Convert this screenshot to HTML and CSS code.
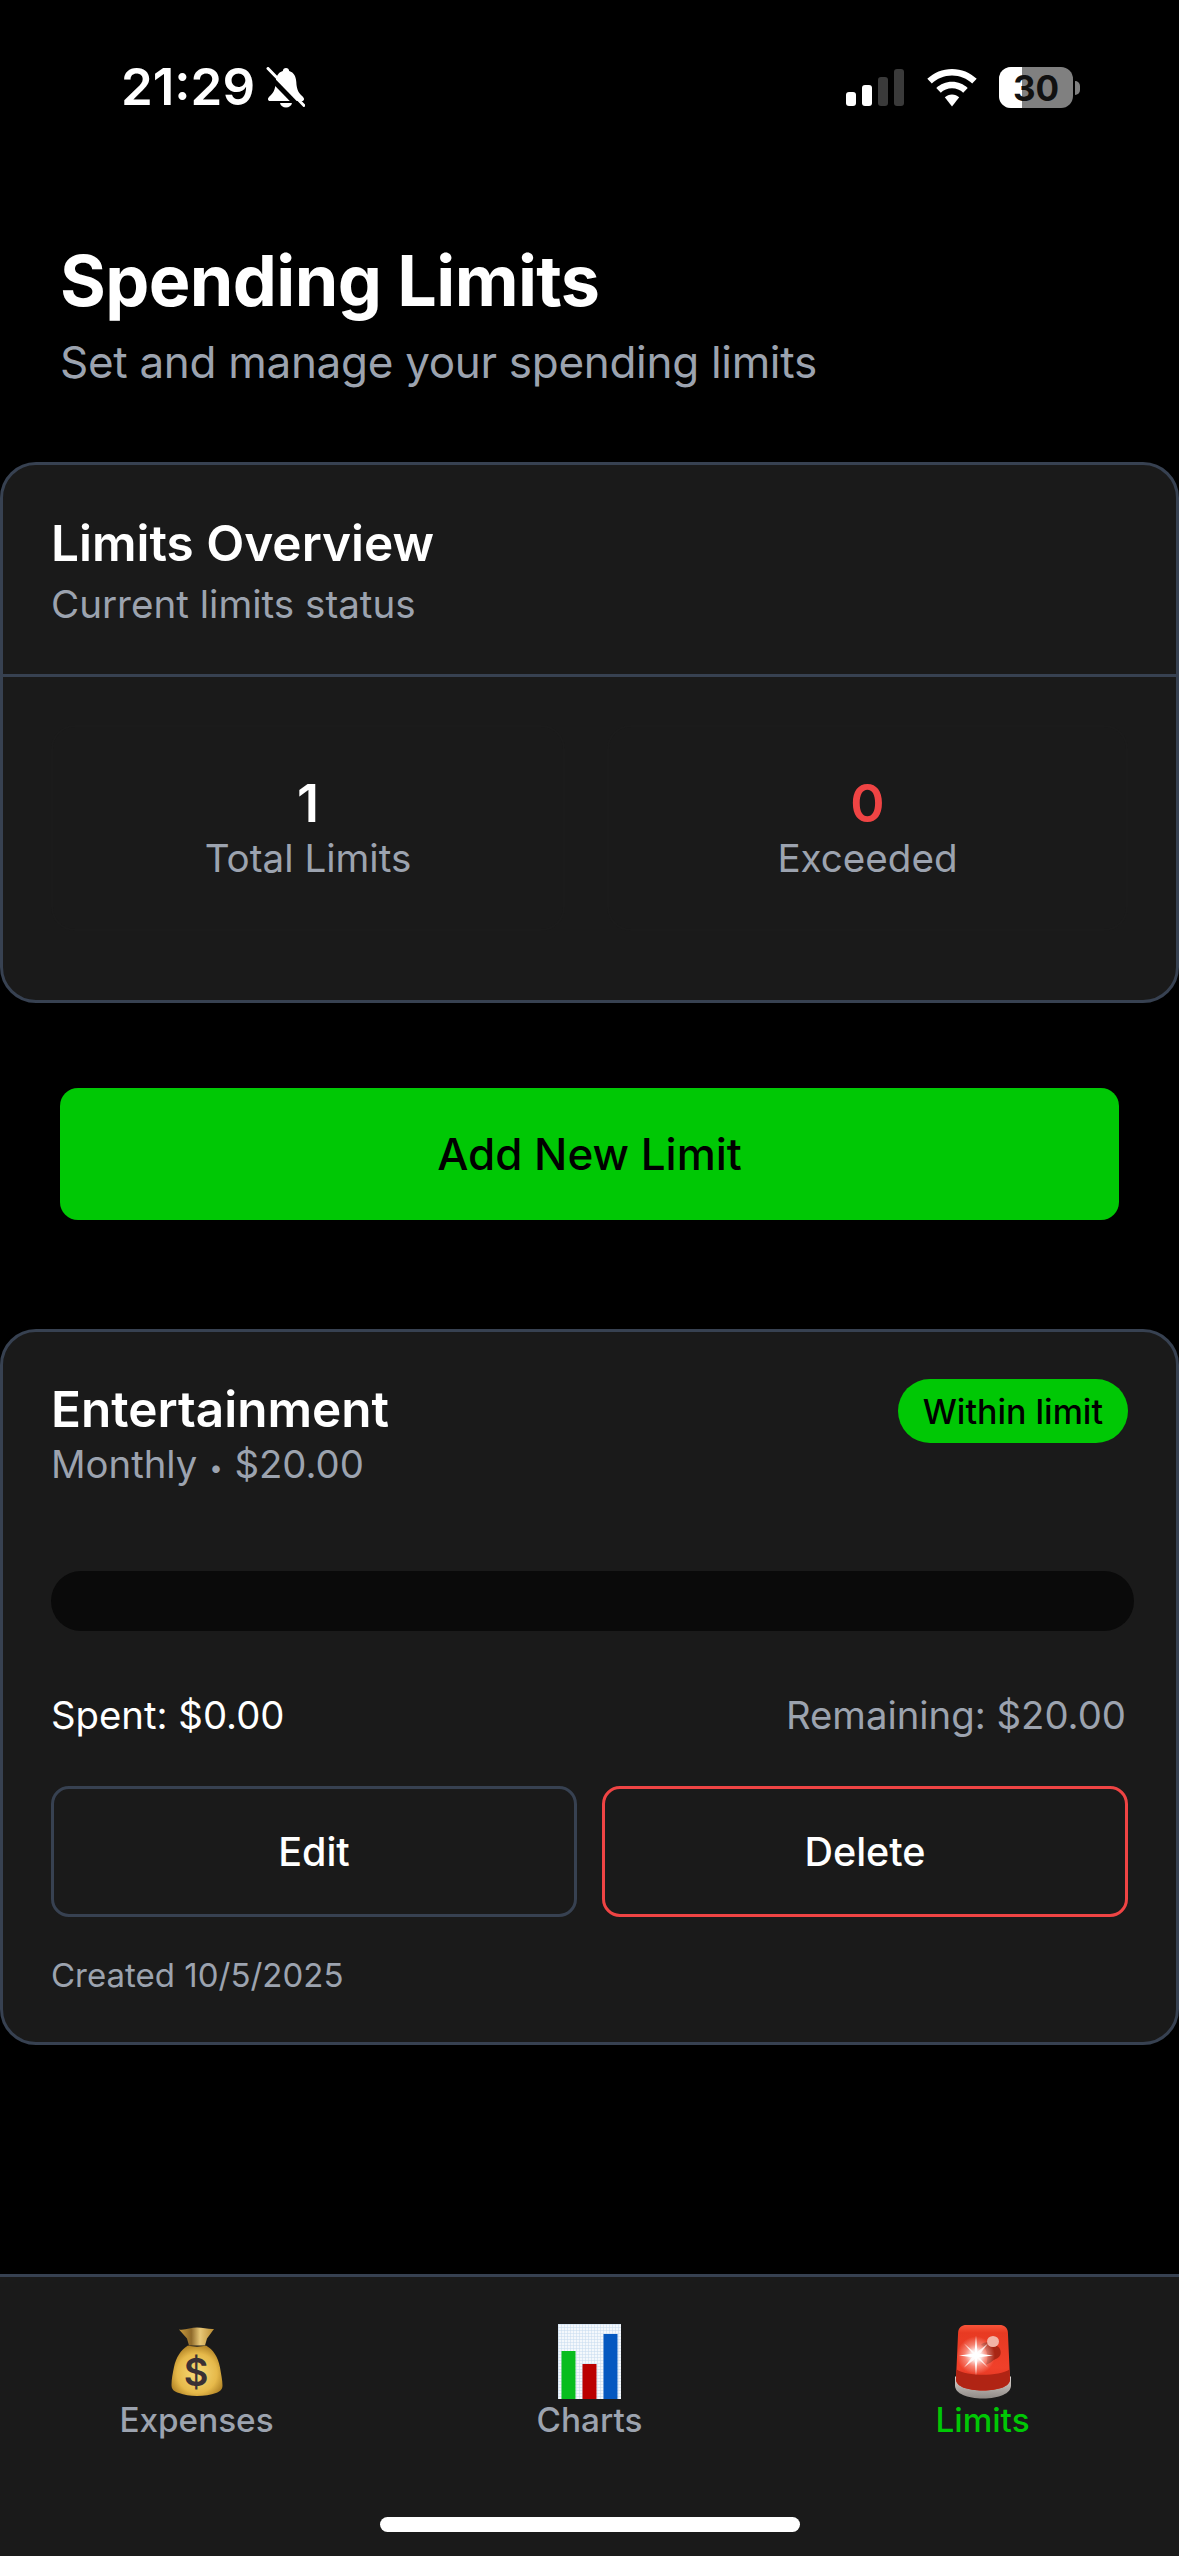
FILE: index.html
```html
<!DOCTYPE html>
<html lang="en">
<head>
    <meta charset="UTF-8">
    <meta name="viewport" content="width=device-width, initial-scale=1.0">
    <title>Spending Limits</title>
    <link rel="stylesheet" href="styles.css">
</head>

<body>
    <div class="app">
        <div class="statusBar">
            <div class="statusLeft">
                <span class="clock">21:29</span>
                <svg class="bell" width="39" height="41" viewBox="0 0 39 41">
                    <path fill="#fff" d="M20 1c-1.800 0-3 1.200-3.200 2.900C12 5.300 10 9.500 9.700 15c-.3 6-1.200 9.500-5.500 13.800C2.500 30.500 2 31 2 32.200c0 1 .8 1.800 2.200 1.800h31.600c1.400 0 2.200-.8 2.200-1.800 0-1.200-.5-1.700-2.200-3.400-4.300-4.300-5.200-7.800-5.500-13.800-.3-5.500-2.300-9.700-7.100-11.100C23 2.200 21.800 1 20 1z"/>
                    <path fill="#fff" d="M14 36h12c-.6 2.800-3 4.500-6 4.500s-5.400-1.700-6-4.500z"/>
                    <path stroke="#000" stroke-width="5" d="M-1 5L34 41"/>
                    <path stroke="#fff" stroke-width="3" stroke-linecap="round" d="M2 1.500L38 38.500"/>
                </svg>
            </div>
            <div class="statusRight">
                <div class="signal">
                    <span class="bar bar1"></span>
                    <span class="bar bar2"></span>
                    <span class="bar bar3 off"></span>
                    <span class="bar bar4 off"></span>
                </div>
                <svg class="wifi" width="50" height="38" viewBox="0 0 50 38">
                    <path fill="#fff" d="M25 0c9.500 0 18.200 3.700 24.700 9.800l-4.500 4.700C40 9.500 32.900 6.500 25 6.500S10 9.500 4.800 14.500L.3 9.800C6.800 3.700 15.500 0 25 0z"/>
                    <path fill="#fff" d="M25 12.800c6.100 0 11.600 2.400 15.700 6.200l-4.500 4.700c-2.900-2.700-6.900-4.400-11.200-4.400s-8.300 1.700-11.200 4.400L9.300 19c4.100-3.800 9.600-6.200 15.700-6.200z"/>
                    <path fill="#fff" d="M25 25.500c2.800 0 5.300 1.100 7.200 2.800L25 37.500l-7.200-9.200c1.900-1.700 4.400-2.800 7.200-2.800z"/>
                </svg>
                <div class="battery">
                    <div class="batteryBody">
                        <div class="batteryFill"></div>
                        <span class="batteryText">30</span>
                    </div>
                    <div class="batteryNub"></div>
                </div>
            </div>
        </div>

        <div class="pageHead">
            <h1>Spending Limits</h1>
            <p>Set and manage your spending limits</p>
        </div>

        <div class="card overview">
            <div class="overviewHead">
                <h2>Limits Overview</h2>
                <p>Current limits status</p>
            </div>
            <div class="stats">
                <div class="stat">
                    <div class="statNum">1</div>
                    <div class="statLabel">Total Limits</div>
                </div>
                <div class="stat">
                    <div class="statNum red">0</div>
                    <div class="statLabel">Exceeded</div>
                </div>
            </div>
        </div>

        <div class="addWrap">
            <button class="addBtn">Add New Limit</button>
        </div>

        <div class="card limit">
            <div class="limitTop">
                <div>
                    <h2>Entertainment</h2>
                    <p>Monthly <span class="dot">•</span> $20.00</p>
                </div>
                <span class="pill">Within limit</span>
            </div>
            <div class="track"></div>
            <div class="amounts">
                <span class="spent">Spent: $0.00</span>
                <span class="remaining">Remaining: $20.00</span>
            </div>
            <div class="actions">
                <button class="actionBtn">Edit</button>
                <button class="actionBtn danger">Delete</button>
            </div>
            <div class="created">Created 10/5/2025</div>
        </div>

        <div class="tabBar">
            <div class="tab">
                <svg class="tabIcon" width="52" height="70" viewBox="0 0 52 70">
                    <defs>
                        <radialGradient id="bagFill" cx="50%" cy="55%" r="60%">
                            <stop offset="0" stop-color="#f7dc7a"/>
                            <stop offset="0.65" stop-color="#e6b94a"/>
                            <stop offset="1" stop-color="#a87a20"/>
                        </radialGradient>
                        <linearGradient id="neckFill" x1="0" x2="1" y1="0" y2="0">
                            <stop offset="0" stop-color="#c99a3c"/>
                            <stop offset="0.35" stop-color="#8f6a2a"/>
                            <stop offset="0.6" stop-color="#e8c878"/>
                            <stop offset="1" stop-color="#b98a30"/>
                        </linearGradient>
                    </defs>
                    <path fill="url(#neckFill)" d="M8 3c6 1 12-2 18-2s12 2 17 1.500L36 12l-2 7H18l-2-7z"/>
                    <path fill="url(#bagFill)" d="M17 19c5 1.500 13 1.500 18 0 7 4 12 11 14 22 1 6 2.500 13 2.500 18 0 4-2.500 6-6.500 7.500-5 2-12 3-19 3s-13-1-18-3c-5-1.500-7.500-3.500-7.500-8 0-6 1.300-12 2.500-18C5 31 10 23 17 19z"/>
                    <text class="bagSign" x="25" y="59" text-anchor="middle">$</text>
                </svg>
                <span class="tabLabel">Expenses</span>
            </div>
            <div class="tab">
                <svg class="tabIcon" width="63" height="75" viewBox="0 0 63 75">
                    <defs>
                        <pattern id="chartGrid" width="3" height="3" patternUnits="userSpaceOnUse">
                            <rect width="3" height="3" fill="#f4f8fc"/>
                            <path d="M0 0H3M0 0V3" stroke="#c6dbef" stroke-width="1"/>
                        </pattern>
                    </defs>
                    <rect width="63" height="75" fill="url(#chartGrid)"/>
                    <rect x="3.500" y="27" width="14" height="48" fill="#08bd1e"/>
                    <rect x="24.500" y="40" width="14" height="35" fill="#bb0000"/>
                    <rect x="45.500" y="10" width="14" height="65" fill="#0458c0"/>
                </svg>
                <span class="tabLabel">Charts</span>
            </div>
            <div class="tab active">
                <svg class="tabIcon" width="56" height="74" viewBox="0 0 56 74">
                    <defs>
                        <linearGradient id="sirenFill" x1="0" x2="0" y1="0" y2="1">
                            <stop offset="0" stop-color="#f8553a"/>
                            <stop offset="0.12" stop-color="#e83a22"/>
                            <stop offset="0.65" stop-color="#f0402a"/>
                            <stop offset="1" stop-color="#d6301c"/>
                        </linearGradient>
                        <linearGradient id="sirenBase" x1="0" x2="0" y1="0" y2="1">
                            <stop offset="0" stop-color="#d8d2ce"/>
                            <stop offset="1" stop-color="#8f8a86"/>
                        </linearGradient>
                        <radialGradient id="sirenFlash">
                            <stop offset="0" stop-color="#fff"/>
                            <stop offset="0.3" stop-color="#fff" stop-opacity="0.85"/>
                            <stop offset="0.6" stop-color="#ffc4b8" stop-opacity="0.5"/>
                            <stop offset="1" stop-color="#ffc4b8" stop-opacity="0"/>
                        </radialGradient>
                    </defs>
                    <path fill="url(#sirenBase)" d="M0 52h56v9c0 8-12 13-28 13S0 69 0 61z"/>
                    <path fill="url(#sirenFill)" d="M3 10C3 3 6 .5 12 .5h32C50 .5 53 3 53 10l2 45c0 7-12 11-27 11S1 62 1 55z"/>
                    <path fill="#b02414" d="M1.500 45C12 52 44 52 54.500 45l.5 10c0 7-12 11-27 11S1 62 1 55z"/>
                    <path fill="#a82614" d="M26 20c6-4 12-2 18 3 3 4 2 9-2 11-4 1-6 5-11 6 2-6 3-14-5-20z"/>
                    <ellipse cx="38" cy="17" rx="6" ry="5.500" fill="#f2b3a6"/>
                    <circle cx="21" cy="31" r="19" fill="url(#sirenFlash)"/>
                    <path fill="#fff" d="M21 11L22.500 29L38 31L22.500 33L21 51L19.500 33L4 31L19.500 29z"/>
                    <path fill="#fff" opacity="0.8" d="M9 19L21.500 29.500L33 43L20.500 32.500zM33 19L22.500 32.500L9 43L19.500 29.500z"/>
                </svg>
                <span class="tabLabel">Limits</span>
            </div>
            <div class="homeBar"></div>
        </div>
    </div>
</body>
</html>
```

FILE: styles.css
```css
* {
    box-sizing: border-box;
}

html, body {
    margin: 0;
    padding: 0;
    background: #000;
}

h1, h2, p {
    margin: 0;
}

button {
    font-family: inherit;
    cursor: pointer;
}

.app {
    width: 1179px;
    height: 2556px;
    display: flex;
    flex-direction: column;
    overflow: hidden;
    font-family: Inter, "Liberation Sans", sans-serif;
    color: #fff;
    background: #000;
}

/* status bar */
.statusBar {
    height: 174px;
    flex-shrink: 0;
    display: flex;
    justify-content: space-between;
    align-items: flex-start;
    padding: 62px 99px 0 121px;
}

.statusLeft {
    display: flex;
    align-items: center;
    gap: 11px;
    height: 50px;
}

.clock {
    font-size: 51px;
    font-weight: 600;
    line-height: 50px;
}

.statusRight {
    display: flex;
    align-items: flex-start;
    margin-top: 5px;
}

.signal {
    display: flex;
    align-items: flex-end;
    gap: 6px;
    height: 37px;
    margin-top: 2px;
}

.bar {
    width: 10px;
    border-radius: 3px;
    background: #fff;
}

.bar.off {
    background: #3a3a3a;
}

.bar1 { height: 14px; }
.bar2 { height: 21px; }
.bar3 { height: 29px; }
.bar4 { height: 37px; }

.wifi {
    margin: 2px 22px 0 23px;
}

.battery {
    display: flex;
    align-items: center;
    height: 41px;
}

.batteryBody {
    position: relative;
    width: 74px;
    height: 41px;
    border-radius: 12px;
    background: #808080;
    overflow: hidden;
    display: flex;
    align-items: center;
    justify-content: center;
}

.batteryFill {
    position: absolute;
    left: 0;
    top: 0;
    bottom: 0;
    width: 23px;
    background: #fff;
}

.batteryText {
    position: relative;
    font-size: 35px;
    font-weight: 700;
    color: #111;
}

.batteryNub {
    width: 5px;
    height: 14px;
    margin-left: 2px;
    border-radius: 0 7px 7px 0;
    background: #808080;
}

/* heading */
.pageHead {
    height: 288px;
    padding: 70px 60px 0;
}

.pageHead h1 {
    font-size: 70px;
    line-height: 74px;
    font-weight: 700;
    letter-spacing: -0.6px;
}

.pageHead p {
    margin-top: 18px;
    font-size: 44px;
    line-height: 52px;
    letter-spacing: -0.3px;
    color: #9ca3af;
}

/* cards */
.card {
    width: 1179px;
    flex-shrink: 0;
    border: 3px solid #374151;
    border-radius: 36px;
    background: #1a1a1a;
}

.card h2 {
    font-size: 49.5px;
    line-height: 58px;
    font-weight: 600;
}

.overview {
    height: 541px;
}

.overviewHead {
    height: 212px;
    padding: 49px 48px 0;
    border-bottom: 3px solid #374151;
}

.overviewHead p, .limitTop p {
    font-size: 38.6px;
    line-height: 46px;
    color: #9ca3af;
}

.overviewHead p {
    margin-top: 9px;
}

.limitTop p {
    margin-top: 3px;
    font-size: 38.3px;
}

.dot {
    font-size: 24px;
    margin: 0 1px;
    vertical-align: 2px;
}

.stats {
    display: grid;
    grid-template-columns: 514px 521px;
    gap: 42px;
    padding: 48px 48px;
}

.stat {
    height: 206px;
    display: flex;
    flex-direction: column;
    align-items: center;
    justify-content: center;
    border: 2px solid #1b1b1b;
    border-radius: 24px;
    background: #1a1a1a;
}

.statNum {
    font-size: 52px;
    line-height: 60px;
    font-weight: 600;
}

.statNum.red {
    color: #ef4444;
}

.statLabel {
    font-size: 38.6px;
    line-height: 48px;
    color: #9ca3af;
}

.addWrap {
    padding: 85px 60px 109px;
}

.addBtn {
    display: block;
    width: 100%;
    height: 132px;
    border: 0;
    border-radius: 18px;
    background: #00c805;
    color: #000;
    font-size: 44px;
    font-weight: 500;
}

.limit {
    height: 716px;
    padding: 47px 48px 0;
}

.limitTop {
    display: flex;
    justify-content: space-between;
    align-items: flex-start;
    height: 192px;
}

.limitTop h2 {
    margin-top: 1px;
}

.pill {
    height: 64px;
    padding: 0 25px;
    display: flex;
    align-items: center;
    border-radius: 32px;
    background: #00c805;
    color: #000;
    font-size: 34px;
    font-weight: 500;
}

.track {
    height: 60px;
    margin-right: -6px;
    border-radius: 30px;
    background: #0a0a0a;
}

.amounts {
    display: flex;
    justify-content: space-between;
    margin-top: 61px;
    padding-right: 2px;
    font-size: 38.3px;
    line-height: 46px;
}

.remaining {
    color: #9ca3af;
}

.actions {
    display: flex;
    gap: 25px;
    margin-top: 48px;
}

.actionBtn {
    flex: 1;
    height: 131px;
    border: 3px solid #374151;
    border-radius: 18px;
    background: #1a1a1a;
    color: #fff;
    font-size: 39.5px;
    font-weight: 500;
}

.actionBtn.danger {
    border-color: #ef4444;
}

.created {
    margin-top: 38px;
    font-size: 33px;
    line-height: 40px;
    color: #9ca3af;
}

/* bottom tabs */
.tabBar {
    position: relative;
    margin-top: auto;
    height: 282px;
    display: grid;
    grid-template-columns: repeat(3, 1fr);
    padding-top: 47px;
    border-top: 3px solid #374151;
    background: #1a1a1a;
}

.tab {
    height: 110px;
    display: flex;
    flex-direction: column;
    align-items: center;
}

.tabIcon {
    flex-shrink: 0;
    height: 75px;
}

.bagSign {
    font-family: Inter, sans-serif;
    font-size: 38px;
    font-weight: 600;
    fill: #3a3034;
}

.tabLabel {
    margin-top: 1px;
    font-size: 33.3px;
    line-height: 40px;
    font-weight: 500;
    color: #9ca3af;
}

.active .tabLabel {
    color: #00c805;
}

.homeBar {
    position: absolute;
    left: 380px;
    bottom: 24px;
    width: 420px;
    height: 15px;
    border-radius: 8px;
    background: #fff;
}
```
